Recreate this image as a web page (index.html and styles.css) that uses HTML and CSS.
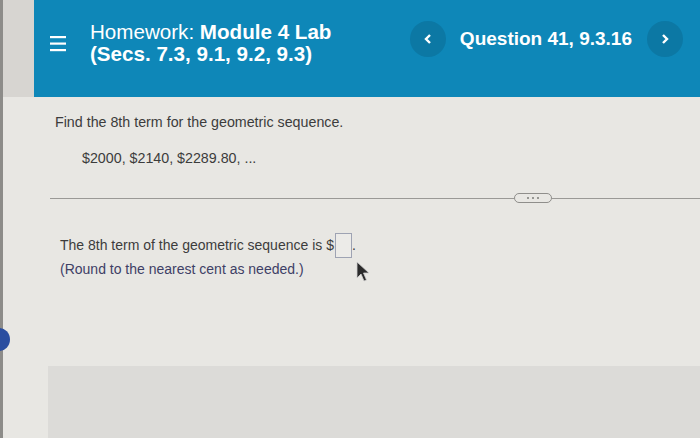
FILE: index.html
```html
<!DOCTYPE html>
<html>
<head>
<meta charset="utf-8">
<link rel="stylesheet" href="styles.css">
</head>
<body>
<div class="page">
  <div class="header-wrap">
    <header class="header">
      <div class="title-group">
        <svg class="menu" width="16" height="18" viewBox="0 0 16 18"><rect x="0" y="2" width="16" height="2.2" fill="#fff"/><rect x="0" y="8.5" width="16" height="2.2" fill="#fff"/><rect x="0" y="15" width="16" height="2.2" fill="#fff"/></svg>
        <div class="title">
          <div>Homework: <b>Module 4 Lab</b></div>
          <div><b>(Secs. 7.3, 9.1, 9.2, 9.3)</b></div>
        </div>
      </div>
      <nav class="qnav">
        <span class="circ"><svg width="10" height="12" viewBox="0 0 10 12"><path d="M7 2 L3 6 L7 10" fill="none" stroke="#fff" stroke-width="2.4"/></svg></span>
        <span class="qlabel">Question 41, 9.3.16</span>
        <span class="circ"><svg width="10" height="12" viewBox="0 0 10 12"><path d="M3 2 L7 6 L3 10" fill="none" stroke="#fff" stroke-width="2.4"/></svg></span>
      </nav>
    </header>
  </div>
  <section class="question">
    <p class="prompt">Find the 8th term for the geometric sequence.</p>
    <p class="seq">$2000, $2140, $2289.80, ...</p>
  </section>
  <div class="divider">
    <span class="line"></span>
    <span class="pill"><i></i><i></i><i></i></span>
    <span class="line"></span>
  </div>
  <section class="answer">
    <p>The 8th term of the geometric sequence is $<span class="box"></span>.</p>
    <p class="note">(Round to the nearest cent as needed.)</p>
  </section>
  <div class="spacer"></div>
  <div class="bottom"></div>
  <span class="dot"></span>
  <svg class="cursor" width="14" height="22" viewBox="0 0 14 22"><path d="M1 1 L1 17 L5 13 L8 20 L10.5 19 L7.5 12 L13 12 Z" fill="#2b2b2b" stroke="#cfcfcf" stroke-width="0.8"/></svg>
</div>
</body>
</html>
```
FILE: styles.css
```css
* { box-sizing: border-box; }
html, body { margin: 0; padding: 0; }
body {
  width: 700px;
  height: 438px;
  overflow: hidden;
  font-family: "Liberation Sans", Arial, sans-serif;
  background: #e8e7e3;
}
.page {
  position: relative;
  height: 438px;
  display: flex;
  flex-direction: column;
  border-left: 3px solid #8d8c89;
}
.header-wrap {
  background: #d7d5d1;
  padding-left: 31px;
}
.header {
  height: 97px;
  background: #0e87b8;
  color: #fff;
  display: flex;
  justify-content: space-between;
  align-items: flex-start;
  padding: 21px 17px 0 16px;
}
.title-group {
  display: flex;
  align-items: center;
  gap: 24px;
}
.title {
  font-size: 20.6px;
  line-height: 22px;
}
.title b { font-weight: bold; }
.qnav {
  display: flex;
  align-items: center;
  gap: 14px;
}
.circ {
  width: 36px;
  height: 36px;
  border-radius: 50%;
  background: #0c78a4;
  display: flex;
  align-items: center;
  justify-content: center;
}
.qlabel {
  font-weight: bold;
  font-size: 19px;
  margin-right: 1px;
}
.question {
  padding: 17px 0 0 52px;
  color: #3c3c3c;
  font-size: 14.25px;
}
.question p { margin: 0; }
.seq { margin-top: 20px !important; padding-left: 27px; }
.divider {
  display: flex;
  align-items: center;
  margin: 27px 0 0 47px;
  height: 10px;
}
.line { height: 1px; background: #9a9996; flex: 1; }
.line:last-child { flex: 0 0 148px; }
.pill {
  width: 38px;
  height: 10px;
  border: 1px solid #8f8e8b;
  border-radius: 5px;
  display: flex;
  align-items: center;
  justify-content: center;
  gap: 3px;
}
.pill i { width: 2px; height: 2px; background: #7d7c79; border-radius: 1px; }
.answer {
  padding: 30px 0 0 57px;
  color: #3c3c3c;
  font-size: 14px;
  line-height: 23px;
}
.answer p { margin: 0; }
.box {
  display: inline-block;
  width: 17px;
  height: 25px;
  border: 1px solid #9ea3b3;
  background: #ecebe8;
  vertical-align: -8px;
  margin-left: 1px;
}
.note { color: #3e4066; }
.spacer { flex: 1; }
.bottom {
  height: 72px;
  margin-left: 45px;
  background: #dcdbd8;
}
.dot {
  position: absolute;
  left: -15px;
  top: 328px;
  width: 22px;
  height: 23px;
  border-radius: 50%;
  background: #2a4ea0;
}
.cursor {
  position: absolute;
  left: 353px;
  top: 261px;
}
```
